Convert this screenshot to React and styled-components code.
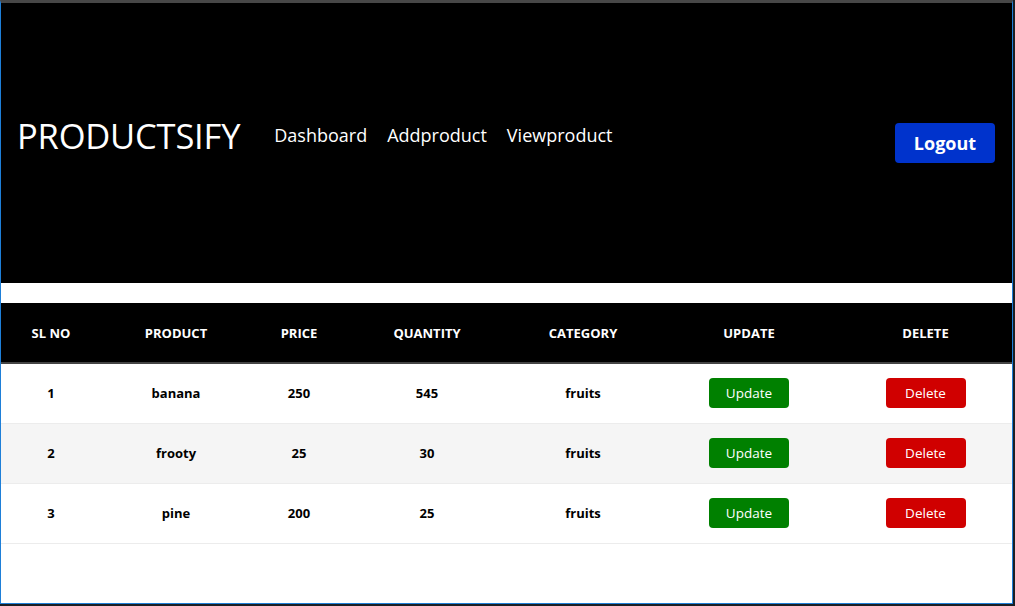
import React from "react";
import styled, { createGlobalStyle } from "styled-components";

const GlobalStyle = createGlobalStyle`
  html, body {
    margin: 0;
    padding: 0;
    background: #1b1f24;
    font-family: "Open Sans", "Noto Sans", sans-serif;
  }
  * {
    box-sizing: border-box;
  }
`;

const Window = styled.div`
  width: 1013px;
  height: 604px;
  background: #fff;
  border: 1px solid #1e7fd8;
  border-top: 3px solid #474747;
  overflow: hidden;
`;

const Header = styled.header`
  height: 280px;
  background: #000;
  display: flex;
  align-items: center;
  padding: 0 17px 0 16px;
`;

const Brand = styled.h1`
  margin: 0 0 16px 0;
  color: #fff;
  font-size: 34.5px;
  font-weight: 400;
  letter-spacing: -0.2px;
`;

const Nav = styled.nav`
  display: flex;
  gap: 20px;
  margin: 0 0 17px 34px;
`;

const NavLink = styled.a`
  color: #fff;
  font-size: 18px;
  text-decoration: none;
  cursor: pointer;
`;

const LogoutButton = styled.button`
  margin-left: auto;
  width: 100px;
  height: 40px;
  border: none;
  border-radius: 4px;
  background: #0033cc;
  color: #fff;
  font-family: inherit;
  font-size: 18px;
  font-weight: 700;
  cursor: pointer;
`;

const TableWrap = styled.div`
  margin-top: 20px;
`;

const Table = styled.table`
  width: 1011px;
  border-collapse: collapse;
  table-layout: fixed;
`;

const Th = styled.th`
  height: 60px;
  background: #000;
  color: #fff;
  font-size: 13px;
  font-weight: 700;
  text-align: center;
  border-bottom: 2px solid #444;
  padding: 0;
`;

const Row = styled.tr`
  background: ${(p) => (p.$striped ? "#f5f5f5" : "#fff")};
  border-bottom: 1px solid #ececec;
`;

const Td = styled.td`
  height: 60px;
  text-align: center;
  font-size: 13px;
  font-weight: 700;
  color: #000;
  padding: 0;
`;

const ActionButton = styled.button`
  width: 80px;
  height: 30px;
  border: none;
  border-radius: 4px;
  background: ${(p) => (p.$danger ? "#d00000" : "#008000")};
  color: #fff;
  font-family: inherit;
  font-size: 13.5px;
  cursor: pointer;
`;

const columns = [
  { label: "SL NO", width: 100 },
  { label: "PRODUCT", width: 150 },
  { label: "PRICE", width: 96 },
  { label: "QUANTITY", width: 160 },
  { label: "CATEGORY", width: 152 },
  { label: "UPDATE", width: 180 },
  { label: "DELETE", width: 173 },
];

const products = [
  { id: 1, name: "banana", price: 250, qty: 545, category: "fruits" },
  { id: 2, name: "frooty", price: 25, qty: 30, category: "fruits" },
  { id: 3, name: "pine", price: 200, qty: 25, category: "fruits" },
];

const App = () => {
  return (
    <>
      <GlobalStyle />
      <Window>
        <Header>
          <Brand>PRODUCTSIFY</Brand>
          <Nav>
            <NavLink>Dashboard</NavLink>
            <NavLink>Addproduct</NavLink>
            <NavLink>Viewproduct</NavLink>
          </Nav>
          <LogoutButton>Logout</LogoutButton>
        </Header>
        <TableWrap>
          <Table>
            <colgroup>
              {columns.map((c) => (
                <col key={c.label} style={{ width: c.width }} />
              ))}
            </colgroup>
            <thead>
              <tr>
                {columns.map((c) => (
                  <Th key={c.label}>{c.label}</Th>
                ))}
              </tr>
            </thead>
            <tbody>
              {products.map((p, i) => (
                <Row key={p.id} $striped={i % 2 === 1}>
                  <Td>{p.id}</Td>
                  <Td>{p.name}</Td>
                  <Td>{p.price}</Td>
                  <Td>{p.qty}</Td>
                  <Td>{p.category}</Td>
                  <Td>
                    <ActionButton>Update</ActionButton>
                  </Td>
                  <Td>
                    <ActionButton $danger>Delete</ActionButton>
                  </Td>
                </Row>
              ))}
            </tbody>
          </Table>
        </TableWrap>
      </Window>
    </>
  );
};

export default App;
